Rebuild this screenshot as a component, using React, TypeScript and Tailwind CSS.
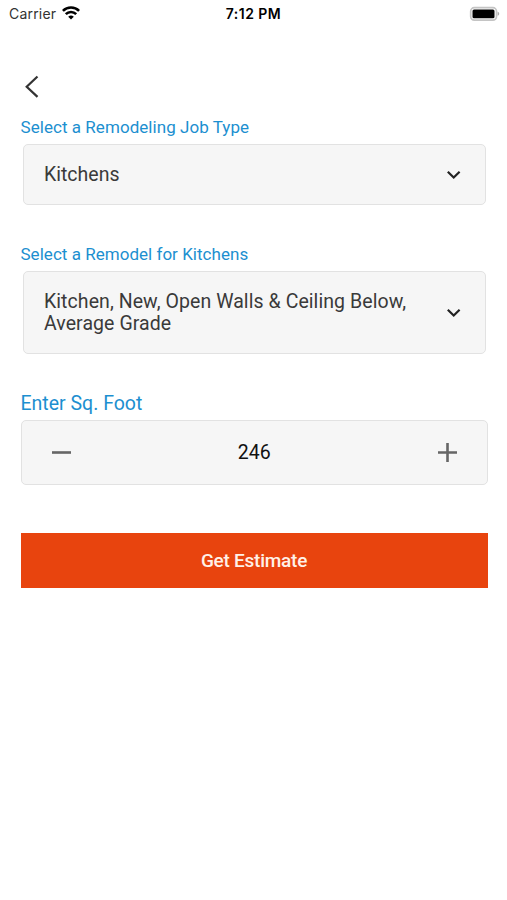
import { useState } from "react";
import type { ReactNode } from "react";

const remodel = "Kitchen, New, Open Walls & Ceiling Below, Average Grade";

function StatusBar() {
  return (
    <div className="grid h-7 grid-cols-3 items-center pl-[9px] pr-[7px] font-['Inter',sans-serif] text-black">
      <div className="flex items-center gap-[6px]">
        <span className="text-[14px] leading-5 tracking-[0.2px] text-[#333]">Carrier</span>
        {/* Wifi */}
        <svg className="-mt-[2px]" width="18" height="14" viewBox="0 0 18 14" fill="none" stroke="#000" strokeWidth="2.6">
          <path d="M0.9 4.9a11.5 11.5 0 0 1 16.2 0" />
          <path d="M3.8 8.1a7.4 7.4 0 0 1 10.4 0" />
          <path d="M9 13.6 6.2 10.8a4 4 0 0 1 5.6 0z" fill="#000" stroke="none" />
        </svg>
      </div>
      <span className="-ml-[2px] text-center text-[14px] font-semibold leading-5 tracking-[0.45px]">7:12 PM</span>
      {/* Battery */}
      <svg className="-mt-px justify-self-end" width="31" height="16" viewBox="0 0 31 16" fill="none">
        <rect x="1.7" y="1.7" width="25.8" height="12.4" rx="3.6" stroke="#c4c4c4" strokeWidth="1.7" />
        <rect x="3.5" y="3.5" width="22" height="8.8" rx="1.5" fill="#000" />
        <path d="M28.6 5.8v4c1-.3 1.6-1 1.6-2s-.6-1.7-1.6-2z" fill="#aaa" />
      </svg>
    </div>
  );
}

function Select({ children, className }: { children: ReactNode; className: string }) {
  return (
    <button
      className={`mx-[2px] flex items-center justify-between rounded-[5px] border border-[#e2e2e2] bg-[#f6f6f6] pl-[20.5px] pr-[24px] text-left leading-[22px] text-[#3a3a3a] ${className}`}
    >
      <span className="w-[380px]">{children}</span>
      <svg width="14" height="10" viewBox="0 0 14 10" fill="none" stroke="#222" strokeWidth="2.2">
        <path d="M0.8 1.7 6.7 7.5l5.9-5.8" />
      </svg>
    </button>
  );
}

export default function App() {
  const [sqFoot, setSqFoot] = useState(246);

  return (
    <div className="min-h-[900px] w-full bg-white font-['Roboto',sans-serif]">
      <StatusBar />

      <main className="flex flex-col pl-[20.5px] pr-[19.5px] pt-[47px]">
        <button aria-label="Back" className="h-6 w-6 pl-1">
          <svg width="14" height="24" viewBox="0 0 14 24" fill="none" stroke="#333" strokeWidth="2.2">
            <path d="M12.5 1.5 1.7 11.7l10.8 10.2" />
          </svg>
        </button>

        <label className="mt-[17px] h-7 text-[17px] leading-[22px] tracking-[0.05px] text-[#1c8fd0]">
          Select a Remodeling Job Type
        </label>
        <Select className="h-[61px] text-[19.5px]">Kitchens</Select>

        <label className="mt-[38px] h-7 text-[17px] leading-[22px] tracking-[0.03px] text-[#1c8fd0]">
          Select a Remodel for Kitchens
        </label>
        <Select className="h-[83px] text-[19.5px] tracking-[0.07px]">{remodel}</Select>

        <label className="mt-[38px] h-7 text-[19.5px] leading-[23px] text-[#1c8fd0]">
          Enter Sq. Foot
        </label>
        <div className="flex h-[65px] items-center justify-between rounded-[5px] border border-[#e2e2e2] bg-[#f6f6f6] pl-[30px] pr-[29.5px]">
          <button aria-label="Decrease" onClick={() => setSqFoot(sqFoot - 1)}>
            <svg width="19" height="19" viewBox="0 0 19 19" stroke="#666" strokeWidth="2.6">
              <path d="M0 9.5h19" />
            </svg>
          </button>
          <span className="text-[19.5px] leading-6 text-[#111]">{sqFoot}</span>
          <button aria-label="Increase" onClick={() => setSqFoot(sqFoot + 1)}>
            <svg width="19" height="19" viewBox="0 0 19 19" stroke="#666" strokeWidth="2.6">
              <path d="M0 9.5h19M9.5 0v19" />
            </svg>
          </button>
        </div>

        <button className="mt-12 h-[55px] bg-[#e8440e] pt-px text-[19px] font-medium tracking-[-0.25px] text-[#fff1e8]">
          Get Estimate
        </button>
      </main>
    </div>
  );
}
